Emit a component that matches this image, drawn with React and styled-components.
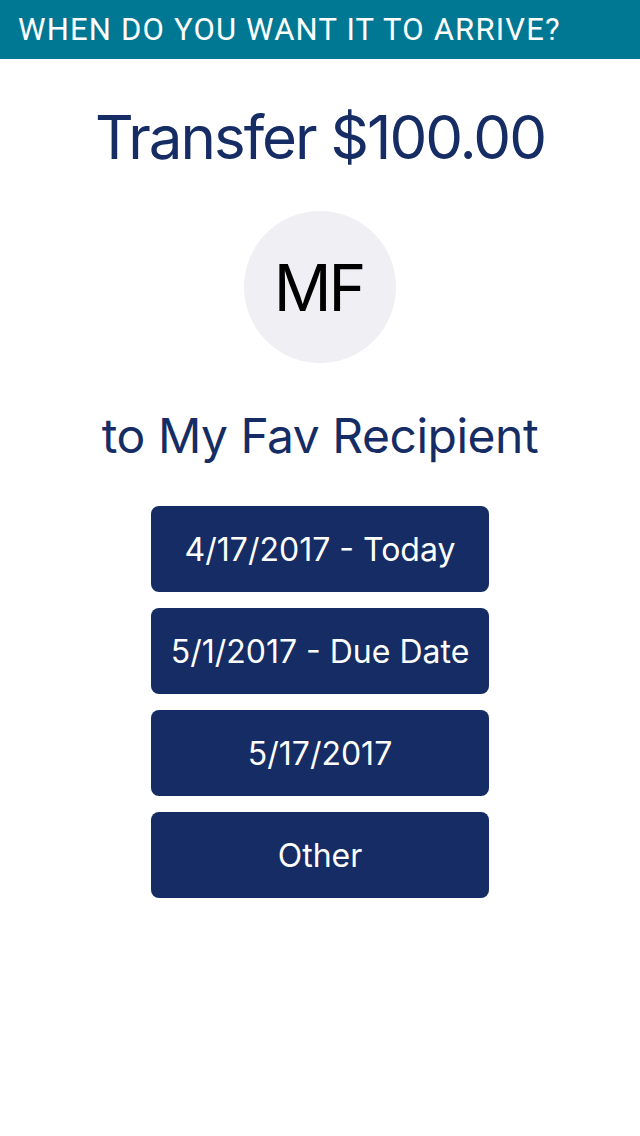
import React from "react";
import styled, { createGlobalStyle } from "styled-components";

const GlobalStyle = createGlobalStyle`
  html, body {
    margin: 0;
    padding: 0;
    background: #ffffff;
  }
  body {
    font-family: Inter, "Noto Sans", sans-serif;
  }
`;

const Page = styled.div`
  width: 640px;
  min-height: 1136px;
  background: #ffffff;
`;

const Header = styled.div`
  height: 59px;
  background: #007894;
  color: #ffffff;
  display: flex;
  align-items: center;
  padding-left: 18px;
  font-family: Roboto, "Liberation Sans", sans-serif;
  font-size: 31px;
  letter-spacing: 1.2px;
  box-sizing: border-box;
`;

const Body = styled.div`
  display: flex;
  flex-direction: column;
  align-items: center;
`;

const Title = styled.div`
  margin-top: 42px;
  font-size: 60px;
  line-height: 72px;
  letter-spacing: -2px;
  color: #152c64;
`;

const Avatar = styled.div`
  margin-top: 38px;
  width: 152px;
  height: 152px;
  border-radius: 50%;
  background: #efeff4;
  display: flex;
  align-items: center;
  justify-content: center;
  font-size: 64px;
  letter-spacing: -3px;
  text-indent: -3px;
  color: #000000;
`;

const Recipient = styled.div`
  margin-top: 44px;
  font-size: 48px;
  line-height: 58px;
  letter-spacing: -0.5px;
  color: #152c64;
`;

const Options = styled.div`
  margin-top: 41px;
  display: flex;
  flex-direction: column;
  gap: 16px;
`;

const Option = styled.button`
  width: 338px;
  height: 86px;
  border: none;
  border-radius: 8px;
  background: #152c64;
  color: #ffffff;
  font-family: Inter, "Noto Sans", sans-serif;
  font-size: 32px;
  padding: 0;
  cursor: pointer;
`;

const dates = ["4/17/2017 - Today", "5/1/2017 - Due Date", "5/17/2017", "Other"];

export default function App() {
  return (
    <Page>
      <GlobalStyle />
      <Header>WHEN DO YOU WANT IT TO ARRIVE?</Header>
      <Body>
        <Title>Transfer $100.00</Title>
        <Avatar>MF</Avatar>
        <Recipient>to My Fav Recipient</Recipient>
        <Options>
          {dates.map((d) => (
            <Option key={d}>{d}</Option>
          ))}
        </Options>
      </Body>
    </Page>
  );
}
